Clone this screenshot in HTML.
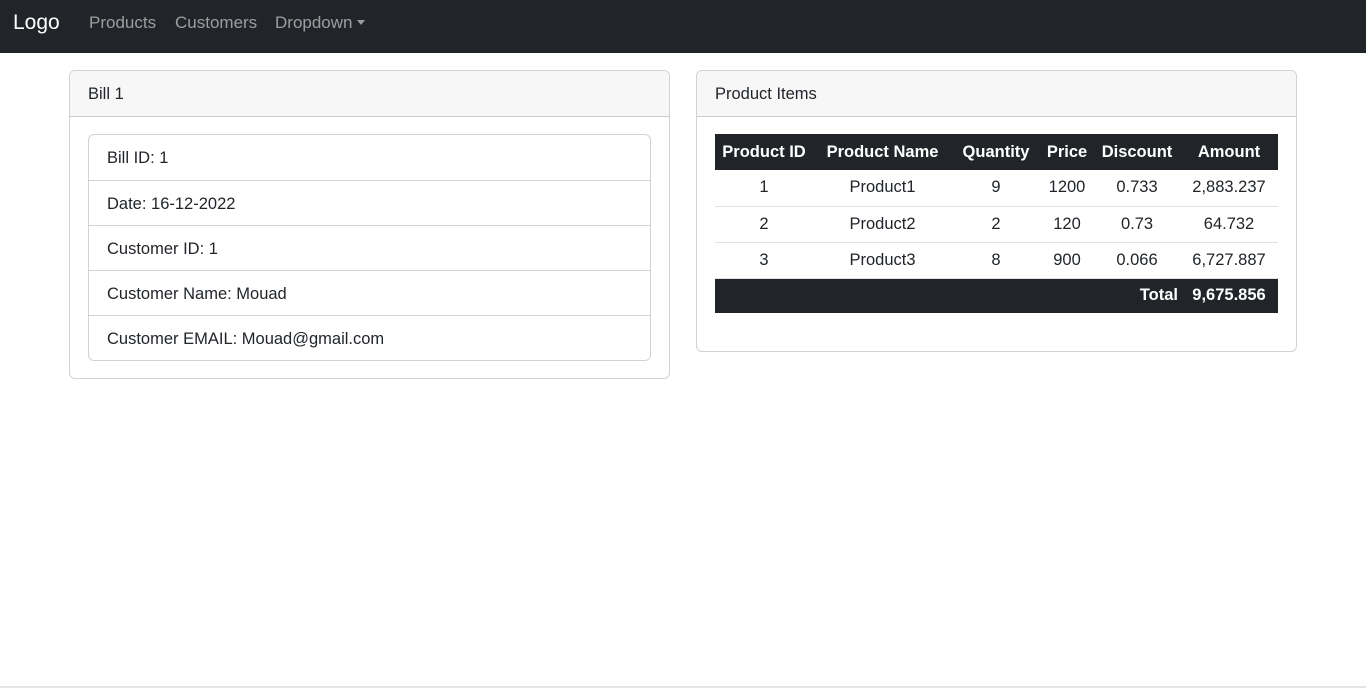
<!DOCTYPE html>
<html><head><meta charset="utf-8"><style>
*{box-sizing:border-box;margin:0;padding:0}
body{width:1366px;height:688px;overflow:hidden;background:#fff;font-family:"Liberation Sans",sans-serif;font-size:16px;color:#212529;position:relative}
.nav{position:absolute;left:0;top:0;width:1366px;height:53px;background:#212529}
.nav span{position:absolute;top:0;line-height:45px;color:rgba(255,255,255,.55);font-size:17px}
.nav .logo{color:#fff;font-size:21px;left:13px;line-height:45px}
.caret{display:inline-block;border-top:5px solid rgba(255,255,255,.55);border-left:4.5px solid transparent;border-right:4.5px solid transparent;vertical-align:3px;margin-left:4px}
.card{position:absolute;border:1px solid rgba(0,0,0,.176);border-radius:6px;overflow:hidden}
.hdr{height:46px;background:#f7f7f7;border-bottom:1px solid rgba(0,0,0,.176);padding-left:18px;line-height:46px;font-size:16.5px}
.lg{position:absolute;left:18px;top:63px;width:563px;border:1px solid rgba(0,0,0,.176);border-radius:6px}
.lg div{height:45px;line-height:45px;padding-left:18px;padding-top:1px;border-top:1px solid rgba(0,0,0,.176);font-size:16.5px}
.lg div:first-child{border-top:none}
table{position:absolute;left:18px;top:63px;width:563px;border-collapse:collapse;text-align:center;font-size:16.5px}
th{background:#212529;color:#fff;font-weight:bold;height:36px;padding:0}
td{height:36px;border-bottom:1px solid #dee2e6;padding:0}
tfoot td{background:#212529;color:#fff;font-weight:bold;height:35px;border:none}
</style></head><body>
<div class="nav"><span class="logo">Logo</span><span style="left:89px">Products</span><span style="left:175px">Customers</span><span style="left:275px">Dropdown<i class="caret"></i></span></div>
<div class="card" style="left:69px;top:70px;width:601px;height:309px">
<div class="hdr">Bill 1</div>
<div class="lg"><div>Bill ID: 1</div><div>Date: 16-12-2022</div><div>Customer ID: 1</div><div>Customer Name: Mouad</div><div>Customer EMAIL: Mouad@gmail.com</div></div>
</div>
<div class="card" style="left:696px;top:70px;width:601px;height:282px">
<div class="hdr">Product Items</div>
<table>
<colgroup><col style="width:98px"><col style="width:139px"><col style="width:88px"><col style="width:54px"><col style="width:86px"><col style="width:98px"></colgroup>
<thead><tr><th>Product ID</th><th>Product Name</th><th>Quantity</th><th>Price</th><th>Discount</th><th>Amount</th></tr></thead>
<tbody>
<tr><td>1</td><td>Product1</td><td>9</td><td>1200</td><td>0.733</td><td>2,883.237</td></tr>
<tr><td>2</td><td>Product2</td><td>2</td><td>120</td><td>0.73</td><td>64.732</td></tr>
<tr><td>3</td><td>Product3</td><td>8</td><td>900</td><td>0.066</td><td>6,727.887</td></tr>
</tbody>
<tfoot><tr><td colspan="5" style="text-align:right;padding-right:2px">Total</td><td>9,675.856</td></tr></tfoot>
</table>
</div>
<div style="position:absolute;left:0;top:686px;width:1366px;height:2px;background:#e5e5e5"></div>
</body></html>
